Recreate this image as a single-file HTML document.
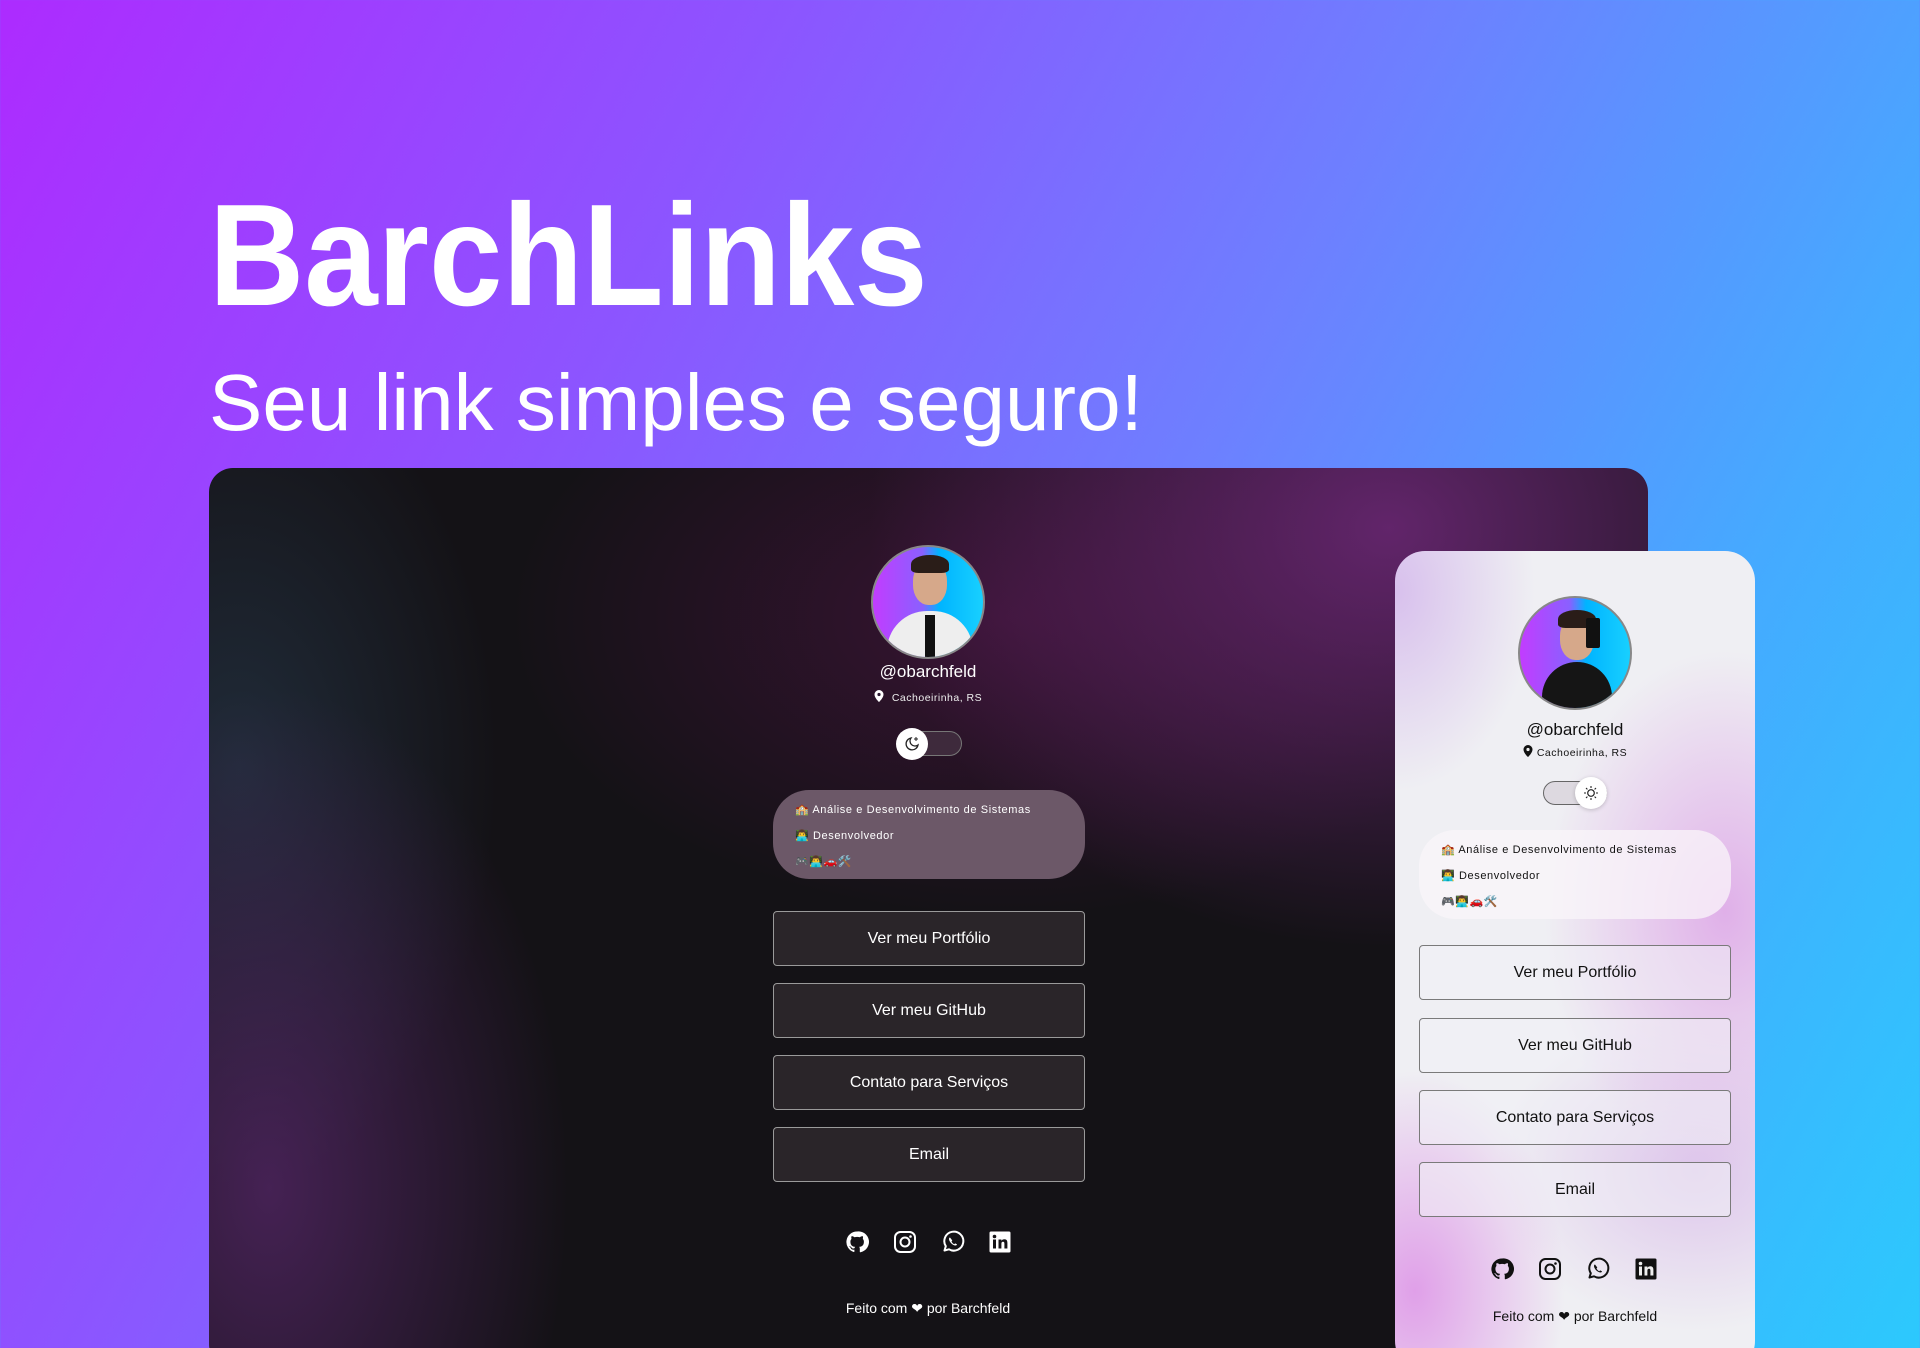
<!DOCTYPE html>
<html style="width:1920px;height:1348px;overflow:hidden"><head><meta charset="utf-8"><style>
*{margin:0;padding:0;box-sizing:border-box}
body{width:1920px;height:1348px;overflow:hidden;position:relative;font-family:"Liberation Sans",sans-serif;
background:linear-gradient(118deg,#ad2bff 0%,#8c55ff 30%,#6d80ff 55%,#45aaff 78%,#2cc9fd 100%);}
h1{position:absolute;left:209px;top:183px;font-weight:700;font-size:145px;color:#fff;letter-spacing:0;line-height:1;transform:scaleX(.91);transform-origin:left;white-space:nowrap}
h2{position:absolute;left:209px;top:363px;font-weight:400;font-size:80px;color:#fff;line-height:1;white-space:nowrap}
.dark{position:absolute;left:209px;top:468px;width:1439px;height:900px;border-radius:24px;overflow:hidden;
background:radial-gradient(ellipse 520px 420px at 1180px 60px,rgba(110,40,120,.85),rgba(110,40,120,0) 100%),
radial-gradient(ellipse 300px 500px at 60px 720px,rgba(90,40,110,.7),rgba(90,40,110,0) 100%),
radial-gradient(ellipse 260px 420px at 30px 300px,rgba(40,60,80,.6),rgba(40,60,80,0) 100%),
radial-gradient(ellipse 500px 300px at 800px 150px,rgba(80,20,70,.6),rgba(80,20,70,0) 100%),#141216}
.light{position:absolute;left:1395px;top:551px;width:360px;height:820px;border-radius:30px;overflow:hidden;
background:radial-gradient(ellipse 180px 260px at 330px 360px,rgba(220,160,230,.8),rgba(220,160,230,0)),
radial-gradient(ellipse 150px 220px at 20px 740px,rgba(220,140,230,.8),rgba(220,140,230,0)),
radial-gradient(ellipse 200px 160px at 300px 620px,rgba(210,170,230,.6),rgba(210,170,230,0)),
radial-gradient(ellipse 140px 200px at 0px 40px,rgba(210,180,235,.8),rgba(210,180,235,0)),#efeff3}
.av{position:absolute;width:114px;height:114px;border-radius:50%;border:2px solid #888;overflow:hidden;
background:linear-gradient(90deg,#c23cff,#8a60ff 45%,#00b4ff 60%,#18d0ff)}
.av .head{position:absolute;left:40px;top:14px;width:34px;height:44px;border-radius:45%;background:#d6a88a}
.av .hair{position:absolute;left:38px;top:8px;width:38px;height:18px;border-radius:50% 50% 20% 20%;background:#2a1d18}
.av .body{position:absolute;left:14px;top:64px;width:86px;height:60px;border-radius:40px 40px 0 0;background:#eee}
.av .tie{position:absolute;left:52px;top:68px;width:10px;height:46px;background:#111}
.t{position:absolute;text-align:center;width:400px}
.btn{position:absolute;width:312px;height:55px;border-radius:4px;display:flex;align-items:center;justify-content:center;font-size:16px}
.dark .btn{background:#2a2529;border:1px solid #9a9a9a;color:#fff}
.light .btn{background:rgba(240,240,245,.55);border:1px solid #7a7a7a;color:#111}
.info{position:absolute;width:312px;height:89px;border-radius:36px;font-size:11px;letter-spacing:.6px;padding:7px 0 0 22px;line-height:26px}
.ic{position:absolute;width:24px;height:24px}
</style></head><body>
<h1>BarchLinks</h1>
<h2>Seu link simples e seguro!</h2>

<div class="dark">
 <div class="av" style="left:662px;top:77px"><div class="body"></div><div class="tie"></div><div class="head"></div><div class="hair"></div></div>
 <div class="t" style="left:519px;top:194px;color:#fff;font-size:17px">@obarchfeld</div>
 <div class="t" style="left:519px;top:222px;color:#eee;font-size:10.5px;letter-spacing:.5px">
  <svg width="10" height="12" viewBox="0 0 10 12" style="vertical-align:-1px;margin-right:8px"><path d="M5 0a4.5 4.5 0 0 0-4.5 4.5C.5 8 5 12 5 12s4.5-4 4.5-7.5A4.5 4.5 0 0 0 5 0z" fill="#fff"/><circle cx="5" cy="4.5" r="1.6" fill="#2a1830"/></svg>Cachoeirinha, RS</div>
 <div style="position:absolute;left:689px;top:263px;width:64px;height:25px;border-radius:13px;border:1px solid #777;background:#3e2a3c"></div>
 <div style="position:absolute;left:687px;top:260px;width:32px;height:32px;border-radius:50%;background:#fff;display:flex;align-items:center;justify-content:center">
  <svg width="16" height="16" viewBox="0 0 16 16"><path d="M7 2a6 6 0 1 0 7 7A5 5 0 0 1 7 2z" fill="none" stroke="#222" stroke-width="1.3"/><path d="M12 1v4M10 3h4" stroke="#222" stroke-width="1"/></svg></div>
 <div class="info" style="left:564px;top:322px;background:#6c5868;color:#fff">🏫 Análise e Desenvolvimento de Sistemas<br>👨‍💻 Desenvolvedor<br>🎮👨‍💻🚗🛠️</div>
 <div class="btn" style="left:564px;top:443px">Ver meu Portfólio</div>
 <div class="btn" style="left:564px;top:515px">Ver meu GitHub</div>
 <div class="btn" style="left:564px;top:587px">Contato para Serviços</div>
 <div class="btn" style="left:564px;top:659px">Email</div>
 <svg class="ic" style="left:636px;top:762px" viewBox="0 0 24 24"><path fill="#fff" d="M12 1.5A10.5 10.5 0 0 0 8.7 22c.5.1.7-.2.7-.5v-1.9c-2.9.6-3.5-1.2-3.5-1.2-.5-1.2-1.2-1.5-1.2-1.5-1-.7.1-.6.1-.6 1 .1 1.600 1.1 1.6 1.1.9 1.6 2.5 1.1 3.1.9.1-.7.4-1.1.7-1.4-2.3-.3-4.8-1.2-4.8-5.2 0-1.1.4-2 1.1-2.8-.1-.3-.5-1.3.1-2.8 0 0 .9-.3 2.9 1.1a10 10 0 0 1 5.300 0c2-1.4 2.9-1.1 2.9-1.1.6 1.5.2 2.5.1 2.8.7.8 1.1 1.7 1.1 2.8 0 4-2.5 4.9-4.8 5.2.4.3.7 1 .7 1.9v2.9c0 .3.2.6.7.5A10.5 10.5 0 0 0 12 1.5z"/></svg>
 <svg class="ic" style="left:684px;top:762px" viewBox="0 0 24 24"><rect x="2" y="2" width="20" height="20" rx="5.5" fill="none" stroke="#fff" stroke-width="2"/><circle cx="12" cy="12" r="4.5" fill="none" stroke="#fff" stroke-width="2"/><circle cx="17.5" cy="6.5" r="1.3" fill="#fff"/></svg>
 <svg class="ic" style="left:732px;top:762px" viewBox="0 0 24 24"><path d="M3.5 20.5l1.3-4.3A9.5 9.5 0 1 1 8 19.3z" fill="none" stroke="#fff" stroke-width="2" stroke-linejoin="round"/><path d="M9 7.5c-.5 0-1 .6-1 1.5 0 2.5 3.5 6.5 6.5 6.5.9 0 1.5-.6 1.5-1.1l-1.8-1-1 .8c-1-.4-2.3-1.7-2.7-2.7l.8-1z" fill="#fff"/></svg>
 <svg class="ic" style="left:779px;top:762px" viewBox="0 0 24 24"><rect x="1.5" y="1.5" width="21" height="21" rx="1.5" fill="#fff"/><rect x="5" y="9.5" width="3" height="9" fill="#141216"/><circle cx="6.5" cy="6.5" r="1.8" fill="#141216"/><path d="M10.5 9.5h2.9v1.4c.6-1 1.7-1.6 3-1.6 2.3 0 3 1.4 3 3.8v5.4h-3v-4.8c0-1.2-.3-2-1.4-2s-1.6.8-1.6 2v4.8h-2.9z" fill="#141216"/></svg>
 <div class="t" style="left:519px;top:832px;color:#fff;font-size:14px">Feito com ❤ por Barchfeld</div>
</div>

<div class="light">
 <div class="av" style="left:123px;top:45px"><div class="body" style="background:#151515;left:22px;width:70px"></div><div class="head" style="top:18px"></div><div class="hair" style="top:12px"></div><div style="position:absolute;left:66px;top:20px;width:14px;height:30px;background:#111;border-radius:2px"></div></div>
 <div class="t" style="left:-20px;top:169px;color:#111;font-size:17px">@obarchfeld</div>
 <div class="t" style="left:-20px;top:194px;color:#111;font-size:10.5px;letter-spacing:.5px">
  <svg width="10" height="12" viewBox="0 0 10 12" style="vertical-align:-1px;margin-right:4px"><path d="M5 0a4.5 4.5 0 0 0-4.5 4.5C.5 8 5 12 5 12s4.5-4 4.5-7.5A4.5 4.5 0 0 0 5 0z" fill="#111"/><circle cx="5" cy="4.5" r="1.6" fill="#eee"/></svg>Cachoeirinha, RS</div>
 <div style="position:absolute;left:148px;top:230px;width:64px;height:24px;border-radius:12px;border:1px solid #666;background:#ddd9e0"></div>
 <div style="position:absolute;left:180px;top:226px;width:32px;height:32px;border-radius:50%;background:#fff;box-shadow:0 1px 4px rgba(0,0,0,.2);display:flex;align-items:center;justify-content:center">
  <svg width="16" height="16" viewBox="0 0 16 16"><circle cx="8" cy="8" r="3.3" fill="none" stroke="#222" stroke-width="1.2"/><path d="M8 1v2M8 13v2M1 8h2M13 8h2M3 3l1.4 1.4M11.6 11.6L13 13M3 13l1.4-1.4M11.6 4.4L13 3" stroke="#222" stroke-width="1.1"/></svg></div>
 <div class="info" style="left:24px;top:279px;background:rgba(250,245,250,.75);color:#111">🏫 Análise e Desenvolvimento de Sistemas<br>👨‍💻 Desenvolvedor<br>🎮👨‍💻🚗🛠️</div>
 <div class="btn" style="left:24px;top:394px">Ver meu Portfólio</div>
 <div class="btn" style="left:24px;top:467px">Ver meu GitHub</div>
 <div class="btn" style="left:24px;top:539px">Contato para Serviços</div>
 <div class="btn" style="left:24px;top:611px">Email</div>
 <svg class="ic" style="left:95px;top:706px" viewBox="0 0 24 24"><path fill="#111" d="M12 1.5A10.5 10.5 0 0 0 8.7 22c.5.1.7-.2.7-.5v-1.9c-2.9.6-3.5-1.2-3.5-1.2-.5-1.2-1.2-1.5-1.2-1.5-1-.7.1-.6.1-.6 1 .1 1.6 1.1 1.6 1.1.9 1.6 2.5 1.1 3.1.9.1-.7.4-1.1.7-1.4-2.3-.3-4.8-1.2-4.8-5.2 0-1.1.4-2 1.1-2.8-.1-.3-.5-1.3.1-2.8 0 0 .9-.3 2.9 1.1a10 10 0 0 1 5.3 0c2-1.4 2.9-1.1 2.9-1.1.6 1.5.2 2.5.1 2.8.7.8 1.1 1.7 1.1 2.8 0 4-2.5 4.9-4.8 5.2.4.3.7 1 .7 1.9v2.9c0 .3.2.6.7.5A10.5 10.5 0 0 0 12 1.5z"/></svg>
 <svg class="ic" style="left:143px;top:706px" viewBox="0 0 24 24"><rect x="2" y="2" width="20" height="20" rx="5.5" fill="none" stroke="#111" stroke-width="2"/><circle cx="12" cy="12" r="4.5" fill="none" stroke="#111" stroke-width="2"/><circle cx="17.5" cy="6.5" r="1.3" fill="#111"/></svg>
 <svg class="ic" style="left:191px;top:706px" viewBox="0 0 24 24"><path d="M3.5 20.5l1.3-4.3A9.5 9.5 0 1 1 8 19.3z" fill="none" stroke="#111" stroke-width="2" stroke-linejoin="round"/><path d="M9 7.5c-.5 0-1 .6-1 1.5 0 2.5 3.5 6.5 6.5 6.5.9 0 1.5-.6 1.5-1.1l-1.8-1-1 .8c-1-.4-2.3-1.7-2.7-2.7l.8-1z" fill="#111"/></svg>
 <svg class="ic" style="left:239px;top:706px" viewBox="0 0 24 24"><rect x="1.5" y="1.5" width="21" height="21" rx="1.5" fill="#111"/><rect x="5" y="9.5" width="3" height="9" fill="#eee"/><circle cx="6.5" cy="6.5" r="1.8" fill="#eee"/><path d="M10.5 9.5h2.9v1.4c.6-1 1.7-1.6 3-1.6 2.3 0 3 1.4 3 3.8v5.4h-3v-4.8c0-1.2-.3-2-1.4-2s-1.6.8-1.6 2v4.8h-2.9z" fill="#eee"/></svg>
 <div class="t" style="left:-20px;top:757px;color:#111;font-size:14px">Feito com ❤ por Barchfeld</div>
</div>
</body></html>
